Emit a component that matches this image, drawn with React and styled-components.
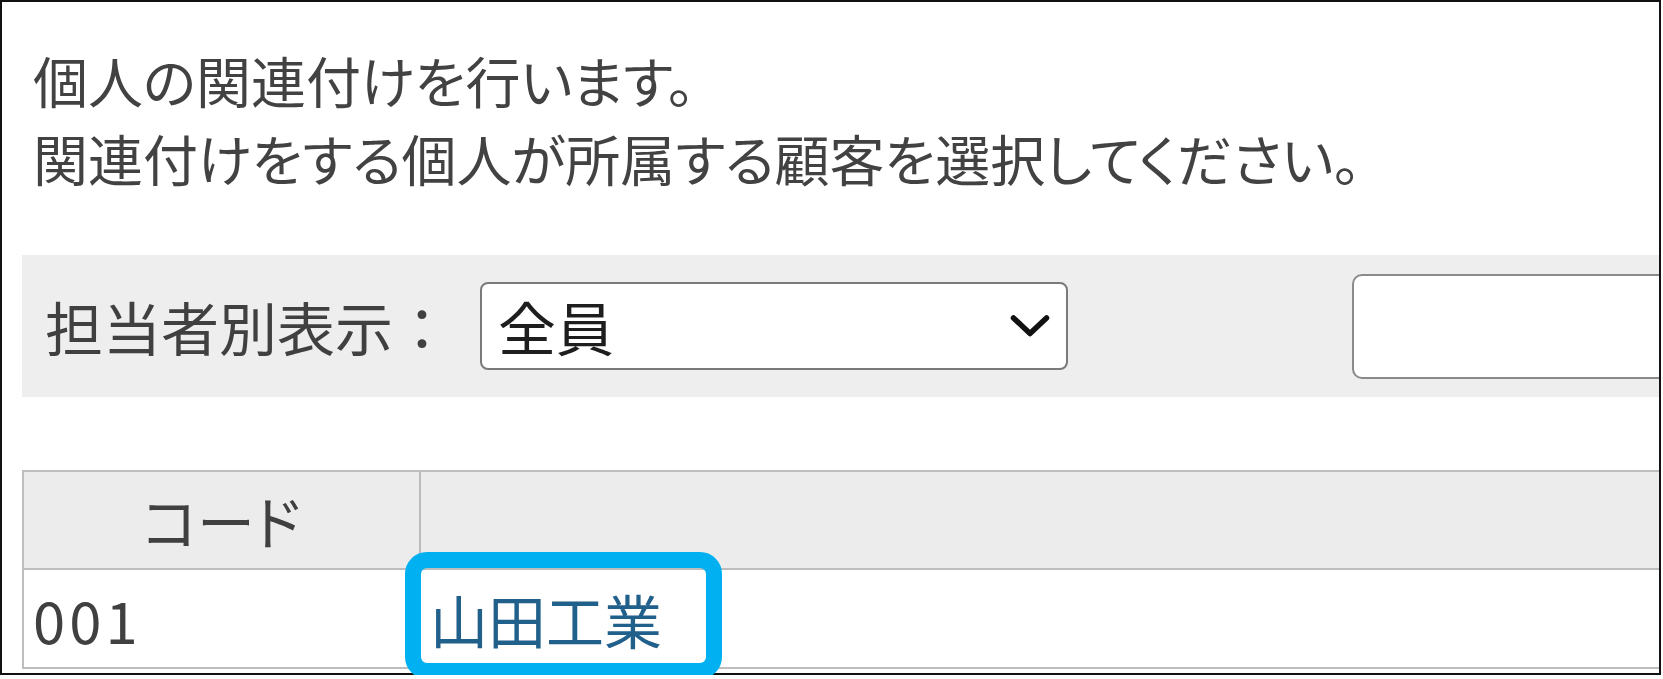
import React from 'react'
import styled, { createGlobalStyle } from 'styled-components'

const GlobalStyle = createGlobalStyle`
html, body {
    margin:0;
    padding:0;
    background:#fff;
    overflow:hidden;
}
body {
    font-family:"Noto Sans CJK JP", "Noto Sans", sans-serif;
}
`

const Frame = styled.div`
width:1661px;
height:675px;
box-sizing:border-box;
border:2px solid #111;
padding-left:20px;
background:#fff;
`

const Intro = styled.p`
margin:38px 0 0 11px;
font-size:55px;
line-height:78px;
color:#424242;
font-feature-settings:"palt";
white-space:nowrap;
`

const Toolbar = styled.div`
margin-top:59px;
height:142px;
background:#eeeeee;
display:flex;
align-items:center;
padding-left:23px;
overflow:hidden;
`

const Label = styled.span`
font-size:58px;
color:#404040;
white-space:nowrap;
`

const SelectBox = styled.div`
margin-left:29px;
width:588px;
height:88px;
box-sizing:border-box;
border:2px solid #7a7a7a;
border-radius:8px;
background:#fff;
display:flex;
align-items:center;
justify-content:space-between;
padding:0 16px 0 16px;
flex-shrink:0;
span{
    font-size:58px;
    color:#1e1e1e;
}
`

const SearchInput = styled.input`
margin-left:284px;
width:420px;
height:105px;
box-sizing:border-box;
border:2px solid #8a8a8a;
border-radius:10px;
background:#fff;
flex-shrink:0;
outline:none;
`

const Grid = styled.div`
margin-top:73px;
display:grid;
grid-template-columns:397px 1fr;
border-top:2px solid #bdbdbd;
border-left:2px solid #bdbdbd;
`

const Cell = styled.div`
position:relative;
box-sizing:border-box;
height:${props => props.head ? '98px' : '99px'};
background:${props => props.head ? '#ececec' : '#fff'};
border-right:${props => props.last ? 'none' : '2px solid #bdbdbd'};
border-bottom:2px solid #bdbdbd;
display:flex;
align-items:center;
justify-content:${props => props.center ? 'center' : 'flex-start'};
padding-left:${props => props.center ? '0' : '9px'};
font-size:58px;
font-feature-settings:${props => props.center ? '"palt"' : 'normal'};
letter-spacing:${props => props.digits ? '4px' : '0'};
color:${props => props.link ? '#22608c' : '#404040'};
white-space:nowrap;
`

const Callout = styled.div`
position:absolute;
left:-16px;
top:-18px;
width:317px;
height:127px;
box-sizing:border-box;
border:16px solid #00b0f0;
border-radius:22px;
pointer-events:none;
`

function Chevron() {
    return (
        <svg width="40" height="24" viewBox="0 0 40 24">
            <path d="M3.5 4 L20 19.5 L36.5 4" fill="none" stroke="#111" strokeWidth="5.5" strokeLinejoin="round" strokeLinecap="round" />
        </svg>
    )
}

function App() {
    return (
        <>
        <GlobalStyle />
        <Frame>
            <Intro>
                個人の関連付けを行います。<br />
                関連付けをする個人が所属する顧客を選択してください。
            </Intro>

            <Toolbar>
                <Label>担当者別表示：</Label>
                <SelectBox>
                    <span>全員</span>
                    <Chevron />
                </SelectBox>
                <SearchInput type="text" />
            </Toolbar>

            <Grid>
                <Cell head center>コード</Cell>
                <Cell head last></Cell>
                <Cell digits>001</Cell>
                <Cell last link>
                    山田工業
                    <Callout />
                </Cell>
            </Grid>
        </Frame>
        </>
    )
}

export default App
